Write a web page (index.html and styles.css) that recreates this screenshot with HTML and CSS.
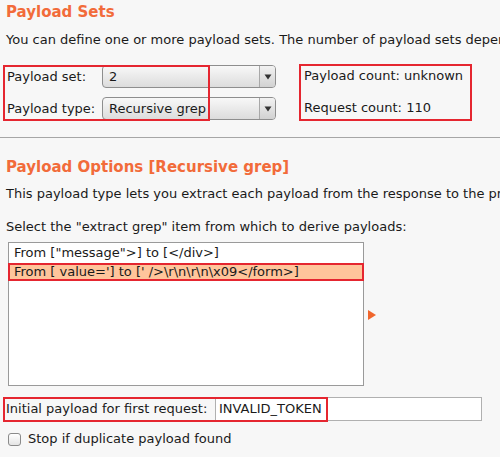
FILE: index.html
```html
<!DOCTYPE html>
<html>
<head>
<meta charset="utf-8">
<link rel="stylesheet" href="styles.css">
</head>
<body>
<div class="panel">
  <h2 class="title">Payload Sets</h2>
  <p class="desc">You can define one or more payload sets. The number of payload sets depends on the attack type.</p>
  <div class="sets">
    <div class="sets-grid">
      <span class="lbl">Payload set:</span>
      <div class="combo"><span class="combo-val">2</span><span class="combo-btn"><svg width="8" height="6" viewBox="0 0 8 6"><path d="M0.5 0.5h7L4 5.5z" fill="#333"/></svg></span></div>
      <span class="lbl">Payload type:</span>
      <div class="combo"><span class="combo-val">Recursive grep</span><span class="combo-btn"><svg width="8" height="6" viewBox="0 0 8 6"><path d="M0.5 0.5h7L4 5.5z" fill="#333"/></svg></span></div>
    </div>
    <div class="counts">
      <span>Payload count: unknown</span>
      <span>Request count: 110</span>
    </div>
    <span class="hl hl-left"></span>
    <span class="hl hl-right"></span>
  </div>
  <div class="sep"></div>
  <h2 class="title title2">Payload Options [Recursive grep]</h2>
  <p class="desc desc2">This payload type lets you extract each payload from the response to the previous request.</p>
  <p class="desc desc3">Select the "extract grep" item from which to derive payloads:</p>
  <div class="list-row">
    <div class="list">
      <div class="item">From ["message"&gt;] to [&lt;/div&gt;]</div>
      <div class="item sel">From [ value='] to [' /&gt;\r\n\r\n\x09&lt;/form&gt;]</div>
    </div>
    <svg class="arrow" width="8" height="10" viewBox="0 0 8 10"><path d="M0 0L8 5L0 10z" fill="#f0662d"/></svg>
  </div>
  <div class="init">
    <span class="init-lbl">Initial payload for first request:</span>
    <div class="field">INVALID_TOKEN</div>
    <span class="hl hl-init"></span>
  </div>
  <label class="check"><span class="box"></span>Stop if duplicate payload found</label>
</div>
</body>
</html>
```
FILE: styles.css
```css
html, body {
  margin: 0;
  padding: 0;
  background: #f7f7f7;
  overflow: hidden;
}
body {
  font-family: "DejaVu Sans", sans-serif;
  font-size: 13px;
  color: #1a1a1a;
  width: 500px;
  height: 457px;
}
.panel {
  padding: 3px 0 0 6px;
  overflow: hidden;
  height: 454px;
}
.title {
  margin: 0;
  font-size: 15px;
  font-weight: bold;
  color: #f26b3a;
  line-height: 18px;
  white-space: nowrap;
}
.desc {
  margin: 11px 0 0 0;
  line-height: 16px;
  white-space: nowrap;
}
.sets {
  position: relative;
  display: flex;
  margin-top: 17px;
  height: 56px;
}
.sets-grid {
  display: grid;
  grid-template-columns: 95px 174px;
  grid-auto-rows: 23px;
  row-gap: 9px;
  align-items: center;
  padding-left: 1px;
}
.lbl {
  line-height: 16px;
}
.combo {
  display: flex;
  height: 23px;
  box-sizing: border-box;
  border: 1px solid #8e8e8e;
  border-radius: 4px;
  background: linear-gradient(#f8f8f8, #dcdcdc);
  overflow: hidden;
}
.combo-val {
  flex: 1;
  padding-left: 6px;
  line-height: 21px;
}
.combo-btn {
  width: 15px;
  border-left: 1px solid #a8a8a8;
  display: flex;
  align-items: center;
  justify-content: center;
  background: linear-gradient(#f2f2f2, #d2d2d2);
}
.counts {
  display: flex;
  flex-direction: column;
  gap: 16px;
  margin-left: 28px;
  padding-top: 3px;
}
.counts span {
  line-height: 16px;
  white-space: nowrap;
}
.hl {
  position: absolute;
  border: 2px solid #e52630;
  box-sizing: border-box;
  pointer-events: none;
}
.hl-left {
  left: -3px;
  top: 0;
  width: 207px;
  height: 56px;
}
.hl-right {
  left: 293px;
  top: -1px;
  width: 173px;
  height: 57px;
}
.sep {
  margin: 16px 0 0 -6px;
  height: 1px;
  background: #a6a6a6;
}
.title2 {
  margin-top: 20px;
}
.desc2 {
  margin-top: 10px;
}
.desc3 {
  margin-top: 17px;
}
.list-row {
  display: flex;
  align-items: center;
  margin-top: 7px;
  padding-left: 2px;
}
.list {
  width: 356px;
  height: 144px;
  box-sizing: border-box;
  border: 1px solid #9a9a9a;
  background: #ffffff;
  padding-top: 1px;
}
.item {
  height: 18px;
  line-height: 18px;
  padding-left: 5px;
  white-space: nowrap;
}
.sel {
  background: #ffc59b;
  box-shadow: inset 0 0 0 2px #e52630;
  margin: 1px -1px 0 -1px;
  padding-left: 6px;
}
.arrow {
  margin-left: 4px;
  margin-top: 2px;
}
.init {
  position: relative;
  display: flex;
  align-items: center;
  margin-top: 11px;
  height: 24px;
}
.init-lbl {
  width: 209px;
  line-height: 16px;
  white-space: nowrap;
}
.field {
  width: 267px;
  height: 24px;
  box-sizing: border-box;
  border: 1px solid #b0b0b0;
  background: #ffffff;
  padding-left: 3px;
  line-height: 22px;
}
.hl-init {
  left: -3px;
  top: 0;
  width: 325px;
  height: 25px;
}
.check {
  display: flex;
  align-items: center;
  margin-top: 10px;
  padding-left: 2px;
  line-height: 16px;
}
.box {
  width: 13px;
  height: 13px;
  box-sizing: border-box;
  border: 1px solid #8a8a8a;
  border-radius: 3px;
  background: linear-gradient(#ffffff, #e4e4e4);
  margin-right: 7px;
}
```
